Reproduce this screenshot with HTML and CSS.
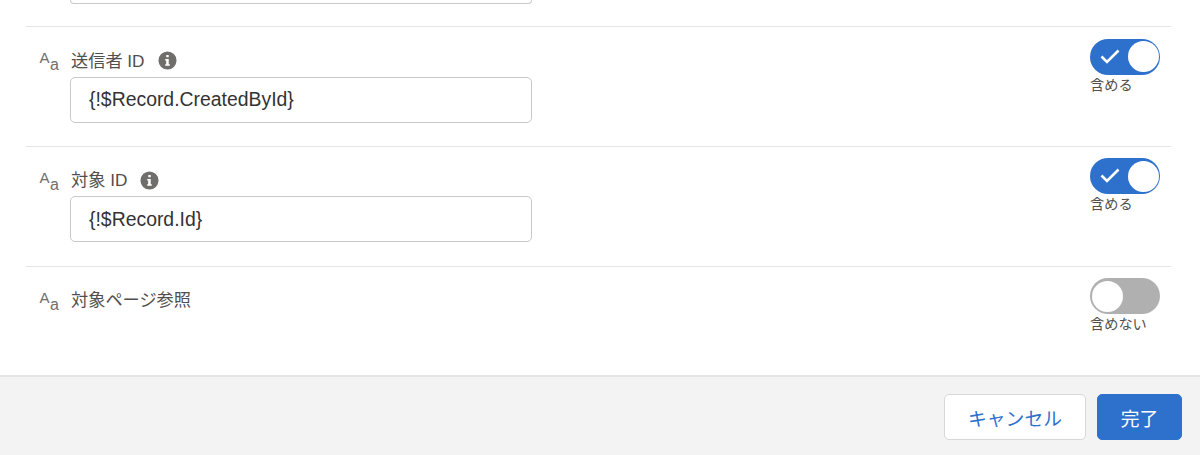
FILE: index.html
```html
<!DOCTYPE html>
<html lang="ja">
<head>
    <meta charset="UTF-8">
    <title>アクション設定</title>
    <link rel="stylesheet" href="styles.css">
</head>
<body>

<div class="panel">
    <div class="panel-body">
        <div class="clipped-row">
            <div class="clipped-input"></div>
        </div>

        <div class="field-row">
            <svg class="type-icon" viewBox="0 0 22 22"><text x="0.5" y="13" class="type-big">A</text><text x="11" y="20" class="type-small">a</text></svg>
            <div class="field-main">
                <div class="field-label">
                    <span>送信者 ID</span>
                    <svg class="info-icon" viewBox="0 0 20 20"><circle cx="10" cy="10" r="9.5" fill="#706e6b"/><rect x="8.7" y="4.2" width="2.6" height="2.5" rx="0.6" fill="#fff"/><path d="M7.6 8.4h3.7v5.6h1.1v1.6H7.6V14h1v-4h-1z" fill="#fff"/></svg>
                </div>
                <input class="text-input" type="text" value="{!$Record.CreatedById}">
            </div>
            <div class="toggle-wrap">
                <span class="toggle on">
                    <svg class="toggle-check" viewBox="0 0 20 16"><path d="M1.5 7.5l5.5 5.5L18.5 1.5" fill="none" stroke="#fff" stroke-width="2.6"/></svg>
                    <span class="toggle-knob"></span>
                </span>
                <span class="toggle-text">含める</span>
            </div>
        </div>

        <div class="field-row">
            <svg class="type-icon" viewBox="0 0 22 22"><text x="0.5" y="13" class="type-big">A</text><text x="11" y="20" class="type-small">a</text></svg>
            <div class="field-main">
                <div class="field-label">
                    <span>対象 ID</span>
                    <svg class="info-icon" viewBox="0 0 20 20"><circle cx="10" cy="10" r="9.5" fill="#706e6b"/><rect x="8.7" y="4.2" width="2.6" height="2.5" rx="0.6" fill="#fff"/><path d="M7.6 8.4h3.7v5.6h1.1v1.6H7.6V14h1v-4h-1z" fill="#fff"/></svg>
                </div>
                <input class="text-input" type="text" value="{!$Record.Id}">
            </div>
            <div class="toggle-wrap">
                <span class="toggle on">
                    <svg class="toggle-check" viewBox="0 0 20 16"><path d="M1.5 7.5l5.5 5.5L18.5 1.5" fill="none" stroke="#fff" stroke-width="2.6"/></svg>
                    <span class="toggle-knob"></span>
                </span>
                <span class="toggle-text">含める</span>
            </div>
        </div>

        <div class="field-row">
            <svg class="type-icon" viewBox="0 0 22 22"><text x="0.5" y="13" class="type-big">A</text><text x="11" y="20" class="type-small">a</text></svg>
            <div class="field-main">
                <div class="field-label">
                    <span>対象ページ参照</span>
                </div>
            </div>
            <div class="toggle-wrap">
                <span class="toggle off">
                    <span class="toggle-knob"></span>
                </span>
                <span class="toggle-text">含めない</span>
            </div>
        </div>
    </div>

    <div class="panel-footer">
        <button class="btn btn-neutral">キャンセル</button>
        <button class="btn btn-brand">完了</button>
    </div>
</div>

</body>
</html>
```

FILE: styles.css
```css
* {
    margin: 0;
    padding: 0;
    box-sizing: border-box;
}

body {
    width: 1200px;
    height: 455px;
    overflow: hidden;
    background-color: #fff;
    color: #3e3e3c;
    font-family: "Liberation Sans", "Noto Sans CJK JP", sans-serif;
}

.panel {
    height: 455px;
    display: flex;
    flex-direction: column;
}

.panel-body {
    height: 375px;
    padding: 0 29px 0 26px;
}

/* Row scrolled off the top, only the input's bottom edge shows */
.clipped-row {
    height: 26.3px;
    padding-left: 44px;
}

.clipped-input {
    width: 462px;
    height: 4px;
    background-color: #fff;
    border: 1px solid #c9c9c9;
    border-top: none;
    border-radius: 0 0 5px 5px;
}

.field-row {
    height: 119.75px;
    border-top: 1px solid #e5e5e5;
    display: flex;
    align-items: flex-start;
}

.type-icon {
    width: 22px;
    height: 22px;
    margin: 23px 0 0 13px;
    flex-shrink: 0;
}

.type-big {
    font-size: 15px;
    fill: #706e6b;
}

.type-small {
    font-size: 16px;
    fill: #706e6b;
}

.field-main {
    margin-left: 9px;
    width: 462px;
    padding-top: 21.3px;
}

.field-label {
    display: flex;
    align-items: center;
    height: 24px;
    padding-left: 1px;
    font-size: 17.2px;
    line-height: 24px;
    color: #514f4d;
}

.info-icon {
    width: 19px;
    height: 19px;
    margin-left: 13px;
}

.text-input {
    display: block;
    width: 462px;
    height: 46px;
    margin-top: 4.1px;
    padding: 0 18px;
    border: 1px solid #c9c9c9;
    border-radius: 5px;
    font-family: inherit;
    font-size: 19.4px;
    color: #333;
    background-color: #fff;
}

.toggle-wrap {
    margin-left: auto;
    margin-right: 11px;
    width: 70px;
    padding-top: 11.4px;
    display: flex;
    flex-direction: column;
}

.toggle {
    display: flex;
    align-items: center;
    width: 70px;
    height: 36px;
    border-radius: 18px;
    padding: 0 1.5px;
}

.toggle.on {
    background-color: #2e71cc;
    justify-content: flex-end;
    position: relative;
}

.toggle.off {
    background-color: #b0b0b0;
}

.toggle-knob {
    width: 31px;
    height: 31px;
    border-radius: 50%;
    background-color: #fff;
}

.toggle-check {
    position: absolute;
    left: 10px;
    top: 10px;
    width: 20px;
    height: 16px;
}

.toggle-text {
    margin-top: 1px;
    font-size: 14.2px;
    line-height: 18px;
    color: #514f4d;
    white-space: nowrap;
}

.panel-footer {
    flex: 1;
    background-color: #f3f3f3;
    border-top: 2px solid #e5e5e5;
    display: flex;
    justify-content: flex-end;
    align-items: flex-start;
    gap: 11px;
    padding: 17px 18px 0 0;
}

.btn {
    height: 46px;
    border-radius: 5px;
    font-family: inherit;
    font-size: 18.8px;
}

.btn-neutral {
    width: 142px;
    background-color: #fff;
    border: 1px solid #d8d8d8;
    color: #2e71cc;
}

.btn-brand {
    width: 85px;
    background-color: #2e71cc;
    border: 1px solid #2e71cc;
    color: #fff;
}
```
